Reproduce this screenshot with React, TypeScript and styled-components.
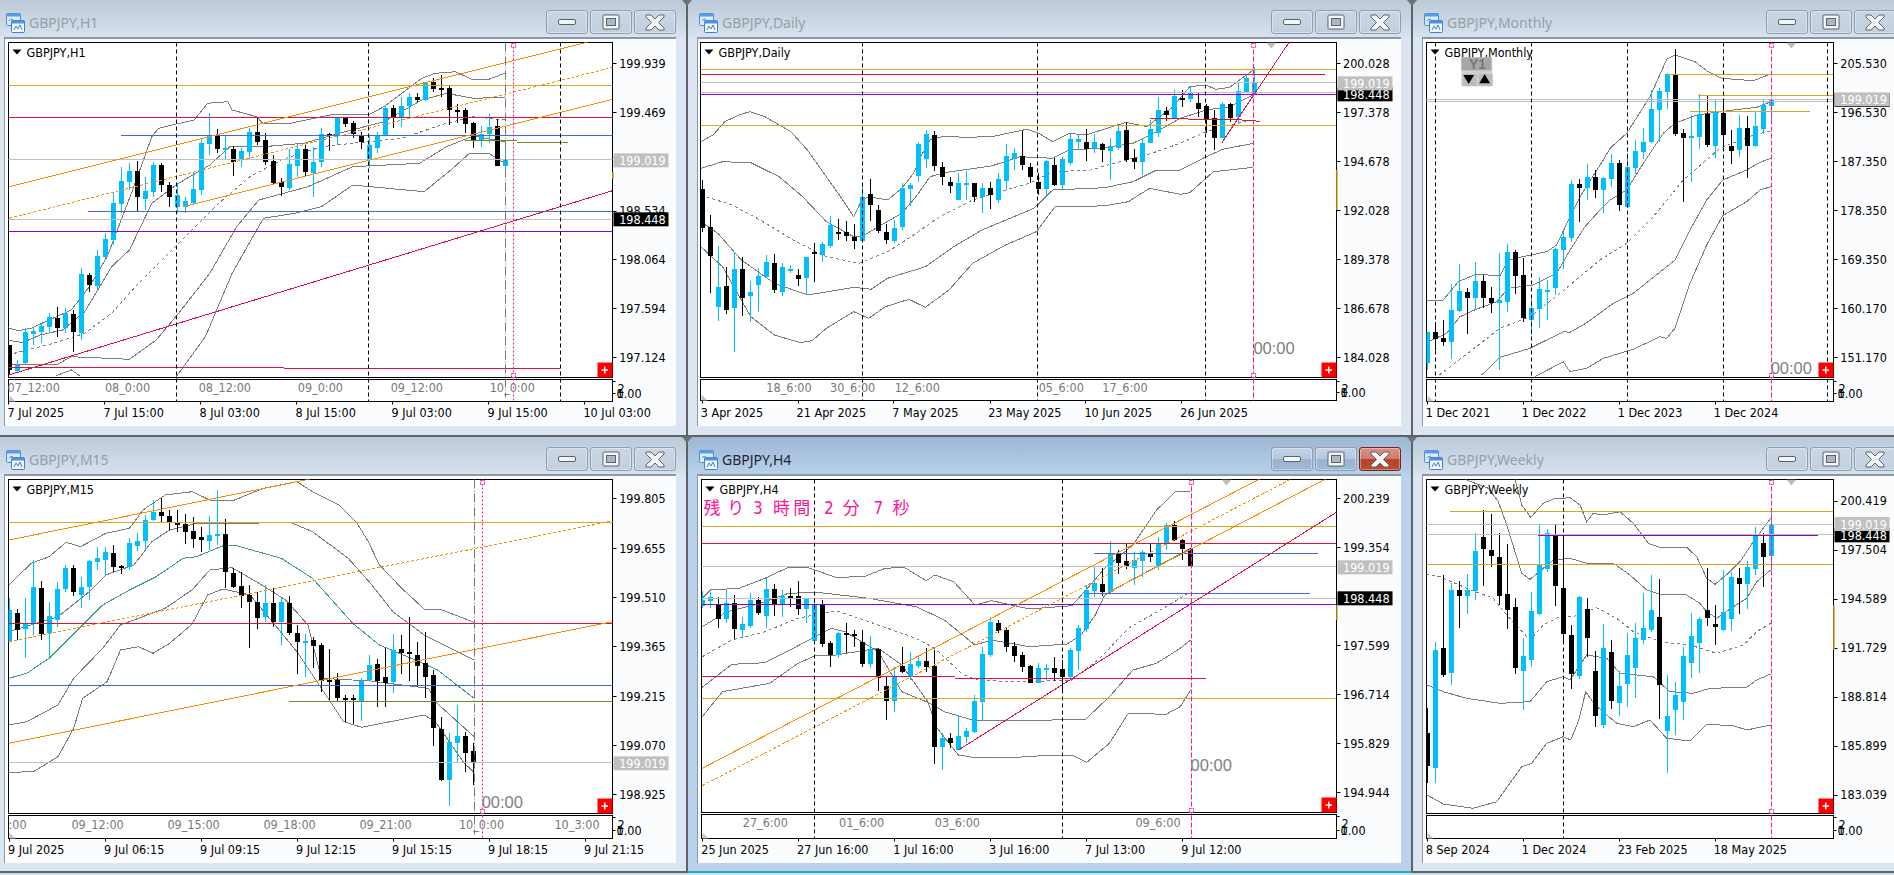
import React from "react";
import styled, { createGlobalStyle } from "styled-components";

const GlobalStyle = createGlobalStyle`
  html, body {
    margin: 0;
    width: 1894px;
    height: 875px;
    overflow: hidden;
    background: #cfdcea;
  }
`;

// Styled
const Desktop = styled.div`
  display: grid;
  grid-template-columns: 688px 725px 495px;
  grid-template-rows: 437px 436px;
  width: 1908px;
`;
const Frame = styled.section<{ $padL: number; $active?: boolean }>`
  position: relative;
  box-sizing: border-box;
  padding: 0 10px 9px ${({ $padL }) => $padL}px;
  border-right: 2px solid #5e6368;
  border-bottom: 2px solid ${({ $active }) => ($active ? "#27a7c0" : "#5e6368")};
  background: ${({ $active }) =>
    $active
      ? "linear-gradient(#9db7d4 0, #b7d0ea 37px, #b9d1eb 37px)"
      : "linear-gradient(#bcc9d7 0, #d6e2ee 37px, #dbe6f2 37px)"};
  &::after {
    content: "";
    position: absolute;
    top: 0;
    right: -6px;
    border: 5px solid transparent;
    border-top: 6px solid #6d7276;
    z-index: 2;
  }
`;
const TitleBar = styled.header`
  display: flex;
  align-items: flex-start;
  height: 37px;
  box-sizing: border-box;
  padding: 10px 0 0 2px;
`;
const TitleIcon = styled.svg`
  flex: none;
  width: 19px;
  height: 20px;
  margin-top: 3px;
`;
const TitleText = styled.span<{ $active?: boolean }>`
  flex: 1;
  margin: 3px 0 0 4px;
  font: 14px "Noto Sans", sans-serif;
  line-height: 20px;
  color: ${({ $active }) => ($active ? "#1b2733" : "#979fa8")};
`;
const ButtonGroup = styled.div`
  display: flex;
  gap: 2px;
`;
const WinButton = styled.div<{ $active?: boolean; $close?: boolean }>`
  display: flex;
  align-items: center;
  justify-content: center;
  width: 42px;
  height: 24px;
  box-sizing: border-box;
  border: 1px solid ${({ $close, $active }) => ($close && $active ? "#6e2a22" : "#8c9fb3")};
  border-radius: 3px;
  box-shadow: inset 0 0 0 1px rgba(255, 255, 255, 0.35);
  background: ${({ $active, $close }) =>
    $close && $active
      ? "linear-gradient(#dd8f84 0, #d27a6c 48%, #b9432b 52%, #bd4a32 100%)"
      : $active
      ? "linear-gradient(#c1d3e6 0, #b6cadf 48%, #9ab4d0 52%, #a0bad6 100%)"
      : "linear-gradient(#cbd6e3, #c2cfde)"};
`;
const Client = styled.div<{ $width: number }>`
  width: ${({ $width }) => $width}px;
  height: 389px;
  background: #fbfcfe;
  box-shadow: inset 1px 2px 0 #8d98a4;
`;
const ChartSvg = styled.svg`
  display: block;
`;
const AxisText = styled.text<{ $tone?: string }>`
  font-family: "DejaVu Sans Condensed", "DejaVu Sans", sans-serif;
  font-stretch: condensed;
  font-size: 12.5px;
  fill: ${({ $tone }) => $tone || "#000"};
`;
const ClockText = styled.text`
  font-family: "Liberation Sans", sans-serif;
  font-size: 16.5px;
  fill: #808080;
`;
const CountdownText = styled.text`
  font-family: "DejaVu Sans Condensed", "Noto Sans CJK JP", sans-serif;
  font-size: 17px;
  fill: #ff1493;
`;
const SmallBadgeText = styled.text`
  font-family: "Liberation Sans", sans-serif;
  font-size: 14px;
  font-weight: 700;
  fill: #787878;
`;

// Colours
const ORANGE = "#ff8c00";
const GOLD = "#daa520";
const CRIMSON = "#dc143c";
const BLUE = "#4169e1";
const SILVER = "#c0c0c0";
const PURPLE = "#9400d3";
const OLIVE = "#6b8e23";
const BAND = "#7c7c7c";
const TEAL = "#3f9a9a";

// Type
type Candle = [number, number, number, number, number];
type PathDef = [string, string, string?];
interface ChartSpec {
  title: string;
  active?: boolean;
  padL: number;
  width: number;
  xs: number;
  sx: number;
  sy: number;
  left: number;
  right: number;
  top: number;
  mainBottom: number;
  subTop: number;
  subBottom: number;
  dateY: number;
  x0: number;
  candles: Candle[];
  bands: PathDef[];
  lines: PathDef[];
  black: number[];
  pink: number;
  pinkDash: string;
  grayDash?: number;
  prices: [number, string][];
  priceX: number;
  badges: [number, string, "silver" | "black"][];
  subLabels: [number, string][];
  subY: number;
  dates: [number, number, string][];
  clock?: [number, number];
  topMark?: number;
  goldTick?: [number, number];
}

const h1: ChartSpec = {
  title: "GBPJPY,H1", padL: 4, width: 672, xs: 2.24, sx: -4, sy: -37,
  left: 17, right: 1372, top: 125, mainBottom: 1130, subTop: 1136, subBottom: 1203, dateY: 1238,
  x0: 20,
  candles: [
    [0,1035,1035,1110,1125],[1,1080,1095,1112,1120],[1,985,997,1090,1095],[1,985,993,1002,1035],[1,970,978,996,1030],
    [1,940,952,980,1000],[0,920,953,985,1010],[1,925,940,985,1000],[0,930,942,995,1055],[1,805,822,998,1020],
    [0,820,826,855,875],[1,750,768,857,870],[1,700,717,770,775],[1,580,608,720,735],[1,500,543,612,640],
    [1,490,513,545,570],[0,483,513,592,637],[1,530,573,597,630],[1,487,495,575,590],[0,490,495,555,575],
    [0,545,555,592,620],[1,550,585,622,640],[1,590,603,620,640],[1,520,567,608,615],[1,415,430,570,585],
    [1,340,405,432,465],[0,388,407,447,460],[1,405,445,450,480],[0,437,447,487,527],[1,445,452,480,500],
    [1,385,397,455,480],[0,352,397,425,435],[0,400,420,487,495],[0,465,483,550,555],[0,533,547,560,587],
    [1,447,492,565,570],[1,430,447,497,532],[0,432,447,515,530],[1,440,487,518,590],[1,385,402,487,500],
    [0,400,403,408,452],[1,350,355,405,435],[0,352,353,372,380],[0,362,370,403,415],[0,395,408,425,447],
    [1,405,435,480,505],[1,395,405,445,458],[1,315,323,405,407],[0,315,325,352,383],[1,290,318,352,380],
    [1,280,292,318,355],[0,280,292,300,305],[1,245,247,300,302],[0,235,245,268,275],[0,225,265,269,290],
    [0,255,265,330,375],[0,312,330,332,370],[0,325,330,372,400],[0,367,369,420,445],[1,378,402,420,440],
    [1,342,380,403,430],[0,358,378,497,497],[1,445,480,497,522],
  ],
  bands: [
    [BAND, "18,983 40,992 70,985 110,960 160,930 200,860 240,770 300,560 340,410 355,385 385,375 435,360 465,310 510,305 520,330 575,350 590,372 650,370 750,342 825,345 860,320 945,235 975,220 1020,215 1060,240 1095,238 1131,220"],
    [BAND, "18,1020 50,1028 90,1005 140,990 190,935 250,800 290,750 340,610 400,550 470,495 515,440 590,440 680,430 760,400 860,365 945,300 1000,280 1060,295 1131,292"],
    [BAND, "18,1065 60,1050 120,1030 190,1000 250,940 310,850 400,730 490,610 560,530 630,480 720,440 790,430 900,415 1000,370 1060,350 1131,360", "3 3"],
    [BAND, "18,1092 130,1092 160,1070 290,1078 350,1020 400,940 470,820 530,680 580,600 690,560 790,500 940,490 1000,440 1060,408 1131,425"],
    [BAND, "125,1127 160,1110 178,1127"],
    [BAND, "395,1130 460,1010 520,820 590,655 660,640 720,620 790,555 950,575 1010,510 1050,462 1095,460 1131,490"],
  ],
  lines: [
    [GOLD, "17,256 1372,256"], [CRIMSON, "17,350 1372,350"], [BLUE, "270,406 1372,406"], [BLUE, "197,632 1372,632"],
    [SILVER, "17,478 1372,478"], [SILVER, "17,658 1372,658"], [PURPLE, "17,694 1372,694"],
    [ORANGE, "20,560 1320,125"], [ORANGE, "410,620 1372,298"], [ORANGE, "20,655 1372,202", "3 2"],
    [OLIVE, "1040,420 1158,422"], [OLIVE, "1158,425 1272,425"],
    [CRIMSON, "20,1125 1372,572"], [CRIMSON, "17,1102 637,1102"], [CRIMSON, "637,1105 1255,1105"],
  ],
  black: [395, 825, 1255], pink: 1148, pinkDash: "2 2", grayDash: 1131,
  prices: [[190,"199.939"],[337,"199.469"],[632,"198.534"],[778,"198.064"],[925,"197.594"],[1072,"197.124"]],
  priceX: 1387,
  badges: [[481,"199.019","silver"],[658,"198.448","black"]],
  subLabels: [[17,"07_12:00"],[235,"08_0:00"],[445,"08_12:00"],[667,"09_0:00"],[875,"09_12:00"],[1097,"10_0:00"]],
  subY: 1162,
  dates: [[18,17,"7 Jul 2025"],[233,232,"7 Jul 15:00"],[448,447,"8 Jul 03:00"],[663,662,"8 Jul 15:00"],[878,877,"9 Jul 03:00"],[1093,1092,"9 Jul 15:00"],[1308,1307,"10 Jul 03:00"]],
  goldTick: [515, 538],
};

const daily: ChartSpec = {
  title: "GBPJPY,Daily", padL: 9, width: 704, xs: 2.119, sx: -17, sy: -37,
  left: 42, right: 1391, top: 125, mainBottom: 1130, subTop: 1136, subBottom: 1201, dateY: 1236,
  x0: 46,
  candles: [
    [0,540,568,685,695],[0,645,680,768,880],[1,738,862,920,962],[0,800,858,930,942],[1,755,808,925,1055],
    [0,770,808,893,948],[1,843,875,888,965],[1,805,828,855,935],[1,765,787,830,835],[0,762,790,870,880],
    [1,790,802,875,888],[1,795,807,813,820],[0,808,826,836,858],[1,770,772,835,883],[0,728,756,762,845],
    [1,725,733,765,785],[1,648,675,738,745],[0,658,695,697,720],[0,662,697,707,722],[0,672,710,722,746],
    [1,553,592,722,725],[0,538,583,614,662],[0,615,630,692,698],[0,672,697,720,732],[1,660,685,723,728],
    [1,550,565,680,690],[1,548,555,567,618],[1,425,432,527,545],[1,390,402,478,505],[0,392,405,497,512],
    [0,485,502,532,555],[0,532,545,557,578],[1,518,550,600,600],[1,512,550,555,600],[0,548,550,590,605],
    [1,548,565,592,640],[0,545,565,585,628],[1,520,538,600,608],[1,432,468,542,570],[1,445,460,478,510],
    [0,392,468,494,510],[0,488,500,532,548],[0,520,547,567,585],[1,480,484,567,592],[0,475,495,555,558],
    [1,470,478,555,567],[1,398,417,490,495],[1,405,417,427,450],[0,388,427,447,482],[1,402,427,445,458],
    [0,428,432,450,485],[1,414,438,453,540],[1,375,393,443,450],[0,365,390,480,485],[0,448,475,485,507],
    [1,415,430,485,525],[1,360,387,428,430],[1,292,330,398,412],[0,322,332,345,362],[1,270,288,355,358],
    [0,270,294,298,320],[1,260,280,298,305],[0,278,308,328,350],[0,312,318,358,400],[0,330,355,413,450],
    [1,305,313,413,415],[0,310,313,355,365],[1,248,273,352,372],[1,225,233,275,277],[1,200,250,283,285],
  ],
  bands: [
    [BAND, "44,425 70,405 95,365 125,345 148,335 180,350 235,395 270,450 295,500 340,590 368,650 385,600 400,590 440,600 470,565 495,520 510,470 530,420 560,408 600,412 660,410 735,388 760,400 790,425 825,400 860,405 945,367 990,380 1012,355 1045,320 1080,260 1115,255 1135,268 1165,262 1200,225 1215,210"],
    [BAND, "44,505 90,485 150,488 210,530 260,590 310,665 368,710 385,710 420,680 470,640 500,590 530,530 560,518 660,498 720,470 790,475 825,450 890,445 960,430 1010,395 1060,355 1115,330 1165,320 1215,285"],
    [BAND, "44,585 110,615 170,660 240,720 310,770 380,790 440,755 490,710 550,650 620,600 690,570 740,550 790,515 870,510 920,490 1000,460 1060,430 1115,395 1165,375 1215,360", "3 3"],
    [BAND, "44,665 80,700 130,780 200,850 270,885 370,862 405,868 440,835 520,800 580,740 640,690 750,625 790,570 900,563 960,545 1010,510 1060,510 1115,470 1150,448 1215,430"],
    [BAND, "44,740 90,800 150,950 200,1005 255,1028 280,1022 310,985 368,935 400,955 435,920 485,898 520,922 570,870 620,790 690,735 755,695 795,620 850,620 900,617 950,605 995,565 1060,583 1080,578 1130,515 1215,502"],
  ],
  lines: [
    [GOLD, "42,208 1391,208"], [CRIMSON, "42,223 1367,223"], [SILVER, "42,247 1391,247"], [SILVER, "42,277 1391,277"],
    [PURPLE, "42,283 1391,283"], [GOLD, "42,376 1391,376"],
    [CRIMSON, "995,355 1190,360"], [CRIMSON, "1190,360 1230,364"], [CRIMSON, "1148,428 1290,128"],
  ],
  black: [385, 757, 1113], pink: 1215, pinkDash: "5 2",
  prices: [[190,"200.028"],[337,"197.378"],[484,"194.678"],[631,"192.028"],[778,"189.378"],[925,"186.678"],[1072,"184.028"]],
  priceX: 1405,
  badges: [[283,"198.448","black"],[250,"199.019","silver"]],
  subLabels: [[183,"18_6:00"],[318,"30_6:00"],[455,"12_6:00"],[760,"05_6:00"],[895,"17_6:00"]],
  subY: 1162,
  dates: [[46,44,"3 Apr 2025"],[249,247,"21 Apr 2025"],[452,450,"7 May 2025"],[656,653,"23 May 2025"],[859,857,"10 Jun 2025"],[1062,1060,"26 Jun 2025"]],
  clock: [1215, 1045], topMark: 1253, goldTick: [510, 630],
};

const monthly: ChartSpec = {
  title: "GBPJPY,Monthly", padL: 9, width: 476, xs: 3, sx: -22, sy: -37,
  left: 77, right: 1300, top: 125, mainBottom: 1130, subTop: 1136, subBottom: 1203, dateY: 1238,
  x0: 80,
  candles: [
    [1,995,997,1088,1110],[0,965,997,1018,1050],[0,960,1013,1026,1038],[1,852,930,1026,1078],[1,792,873,933,937],
    [0,865,877,893,1002],[1,786,843,894,930],[0,825,843,894,925],[0,860,894,908,938],[1,760,900,910,1110],
    [1,732,756,906,936],[0,750,756,828,882],[0,775,825,955,965],[1,897,925,960,1005],[1,832,868,927,985],
    [1,840,870,872,960],[1,745,748,864,886],[1,697,712,750,806],[1,540,552,714,726],[0,537,552,564,665],
    [1,492,531,564,600],[0,510,531,570,595],[1,530,533,570,638],[1,462,489,537,562],[0,480,489,615,633],
    [1,460,501,621,625],[1,420,453,504,522],[1,385,426,456,478],[1,270,327,426,430],[1,265,273,330,425],
    [1,220,222,276,327],[0,148,225,403,408],[0,388,399,414,606],[1,345,408,414,546],[1,283,343,411,447],
    [0,285,343,435,441],[1,297,336,438,474],[0,305,339,405,440],[0,390,438,453,492],[1,345,384,450,472],
    [0,348,384,438,534],[1,335,378,438,442],[1,297,315,387,402],[1,296,297,318,360],
  ],
  bands: [
    [BAND, "77,903 130,900 175,845 230,822 300,828 325,780 360,772 440,755 470,735 510,650 540,590 610,480 630,445 680,400 750,290 800,178 825,165 885,185 920,212 965,235 1060,242 1112,222"],
    [BAND, "77,1028 140,1000 180,950 230,927 290,905 325,865 400,855 470,820 510,750 555,680 600,630 630,600 680,570 730,490 790,400 825,370 890,345 1000,330 1070,322 1112,305"],
    [BAND, "118,1125 190,1070 300,985 390,950 480,880 600,780 680,730 760,650 850,540 960,445 1060,405 1112,393", "3 3"],
    [BAND, "245,1125 300,1072 390,1045 490,995 510,997 560,968 640,910 700,880 750,840 825,780 870,690 920,600 968,540 1040,510 1080,487 1112,475"],
    [BAND, "405,1130 490,1085 510,1115 560,1105 610,1075 700,1048 780,1010 800,1015 825,985 870,850 920,735 968,647 1040,605 1080,570 1112,560"],
  ],
  lines: [
    [GOLD, "800,223 1300,223"], [GOLD, "895,284 1300,284"], [GOLD, "870,334 1230,334"],
    [SILVER, "77,296 1300,296"], [SILVER, "77,302 1300,302"],
  ],
  black: [104, 392, 680, 968, 1280], pink: 1112, pinkDash: "5 2",
  prices: [[190,"205.530"],[337,"196.530"],[484,"187.350"],[631,"178.350"],[778,"169.350"],[925,"160.170"],[1072,"151.170"]],
  priceX: 1321,
  badges: [[300,"198.448","black"],[298,"199.019","silver"]],
  subLabels: [],
  subY: 1162,
  dates: [[80,77,"1 Dec 2021"],[368,365,"1 Dec 2022"],[656,653,"1 Dec 2023"],[944,941,"1 Dec 2024"]],
  clock: [1112, 1105], topMark: 1174,
};

const m15: ChartSpec = {
  title: "GBPJPY,M15", padL: 4, width: 672, xs: 2.24, sx: -4, sy: -39,
  left: 19, right: 1372, top: 131, mainBottom: 1135, subTop: 1141, subBottom: 1210, dateY: 1244,
  x0: 21,
  candles: [
    [1,490,525,620,622],[0,522,535,585,615],[1,490,567,583,668],[1,375,457,567,600],[0,438,460,597,615],
    [1,500,544,595,665],[1,440,463,555,575],[1,390,400,462,470],[0,390,400,472,483],[1,425,455,480,518],
    [1,375,378,455,495],[1,335,370,380,405],[1,335,352,375,420],[0,330,355,397,410],[0,390,394,400,417],
    [1,310,325,395,405],[1,295,318,332,348],[1,240,255,318,345],[1,195,230,255,258],[0,190,232,243,260],
    [0,225,243,260,285],[0,225,260,270,292],[0,237,268,290,327],[0,245,288,312,340],[0,275,306,315,352],
    [1,243,300,317,345],[1,165,298,300,330],[0,253,298,410,460],[0,400,414,455,460],[0,410,453,483,518],
    [0,450,480,502,638],[0,470,502,548,582],[1,450,505,545,560],[0,460,505,560,575],[1,490,500,560,630],
    [0,483,505,593,600],[0,570,595,622,717],[1,597,618,624,725],[0,605,616,632,700],[0,625,630,737,772],
    [0,642,735,737,795],[0,715,736,790,800],[0,780,790,794,860],[0,780,790,795,868],[1,730,738,798,858],
    [1,660,690,736,738],[0,672,687,738,815],[0,640,726,744,815],[1,597,645,740,775],[0,600,643,653,717],
    [0,545,651,656,738],[0,620,660,692,755],[0,590,685,725,790],[0,705,720,880,932],[0,845,882,1034,1038],
    [1,895,921,1034,1112],[1,810,903,923,985],[0,890,903,953,1010],[0,925,948,980,1050],
  ],
  bands: [
    [BAND, "20,450 70,385 110,365 148,322 180,335 237,295 290,280 320,225 370,180 430,170 470,195 520,198 590,160 665,140 700,170 760,210 800,265 825,320 850,390 900,460 950,522 990,525 1062,562"],
    [BAND, "20,590 130,545 200,470 237,420 300,390 340,320 380,285 440,265 550,265 650,262 700,290 780,370 830,445 880,530 950,600 1062,675"],
    [TEAL, "20,730 60,715 110,670 170,590 230,510 290,465 350,425 410,370 440,365 500,332 530,332 630,370 700,430 790,565 850,630 930,675 980,705 1062,790"],
    [BAND, "20,870 60,860 130,810 165,730 230,640 270,570 370,520 430,465 470,405 520,398 580,445 640,495 690,570 720,730 830,738 930,755 960,760 975,800 1062,905"],
    [BAND, "20,1012 75,1010 130,965 165,880 185,790 240,740 270,645 310,635 343,655 380,625 430,568 465,480 500,462 560,480 610,560 665,650 720,760 770,860 810,877 950,840 975,860 1040,985 1062,1012"],
  ],
  lines: [
    [GOLD, "19,262 1372,262"], [CRIMSON, "19,565 1372,565"], [BLUE, "19,751 1372,751"], [OLIVE, "648,799 1372,799"], [SILVER, "19,982 1372,982"],
    [ORANGE, "20,315 695,132"], [ORANGE, "20,925 1372,560"], [ORANGE, "20,620 1372,258", "3 2"],
  ],
  black: [], pink: 1079, pinkDash: "2 2", grayDash: 1061,
  prices: [[190,"199.805"],[340,"199.655"],[487,"199.510"],[634,"199.365"],[784,"199.215"],[931,"199.070"],[1078,"198.925"]],
  priceX: 1387,
  badges: [[985,"199.019","silver"]],
  subLabels: [[19,":00"],[160,"09_12:00"],[375,"09_15:00"],[590,"09_18:00"],[805,"09_21:00"],[1028,"10_0:00"],[1242,"10_3:00"]],
  subY: 1168,
  dates: [[20,18,"9 Jul 2025"],[236,233,"9 Jul 06:15"],[451,448,"9 Jul 09:15"],[666,663,"9 Jul 12:15"],[881,878,"9 Jul 15:15"],[1096,1093,"9 Jul 18:15"],[1311,1308,"9 Jul 21:15"]],
  clock: [1079, 1102],
};

const h4: ChartSpec = {
  title: "GBPJPY,H4", active: true, padL: 9, width: 704, xs: 2.119, sx: -17, sy: -39,
  left: 45, right: 1391, top: 131, mainBottom: 1130, subTop: 1136, subBottom: 1210, dateY: 1243,
  x0: 47,
  candles: [
    [1,467,495,512,520],[1,470,485,497,520],[0,485,510,552,580],[1,465,505,552,565],[0,480,503,583,612],
    [1,545,567,585,607],[1,475,495,573,578],[0,485,495,535,540],[1,430,462,543,580],[0,447,462,510,543],
    [1,465,483,510,545],[0,458,483,487,515],[0,438,483,522,540],[1,490,490,522,565],[1,490,508,618,620],
    [0,495,508,628,635],[0,618,625,660,695],[1,590,595,660,670],[0,565,595,598,655],[0,585,597,602,635],
    [0,585,622,687,695],[1,603,642,688,700],[0,640,643,728,768],[0,725,752,797,855],[1,695,722,797,830],
    [0,635,693,712,715],[1,650,687,725,735],[1,665,678,692,700],[0,640,678,695,712],[0,645,693,935,988],
    [1,895,908,935,1005],[0,895,908,925,940],[1,840,903,945,945],[1,880,887,905,925],[1,780,798,892,895],
    [1,635,656,800,855],[1,545,562,660,665],[0,555,564,588,595],[0,578,585,635,652],[0,620,633,662,680],
    [0,650,660,697,710],[0,690,693,745,745],[1,685,698,743,745],[1,688,700,705,735],[0,665,700,713,738],
    [0,675,703,727,770],[1,640,645,727,730],[1,570,578,648,705],[1,450,465,582,590],[1,395,445,468,485],
    [0,400,447,472,482],[1,318,355,472,475],[0,345,358,383,418],[0,325,378,392,402],[1,350,376,398,450],
    [1,345,352,377,425],[0,328,358,365,380],[1,305,327,395,405],[1,265,270,325,345],[0,258,270,315,318],
    [0,312,315,342,375],[0,338,342,393,395],
  ],
  bands: [
    [BAND, "47,490 65,465 125,460 180,430 230,397 270,397 330,427 390,425 435,400 475,397 522,437 540,420 580,440 625,510 660,497 740,522 830,512 860,465 900,400 960,330 1010,225 1050,170 1082,168"],
    [BAND, "47,575 100,530 170,505 230,475 290,472 400,490 500,515 560,555 625,630 660,615 740,635 820,627 850,600 880,540 900,480 950,440 1010,395 1082,340"],
    [BAND, "47,665 110,615 180,590 250,550 330,527 400,560 500,610 540,640 600,720 640,737 740,740 830,735 890,670 950,580 1030,515 1082,470", "3 3"],
    [BAND, "47,757 110,688 180,683 240,640 320,580 350,590 420,650 470,770 530,805 560,830 620,855 740,857 860,852 910,785 960,705 1010,685 1060,640 1082,615"],
    [BAND, "47,845 90,770 190,745 250,685 290,660 330,660 420,640 470,690 525,800 545,880 590,960 620,967 700,968 790,960 830,960 862,982 910,925 950,835 1030,838 1060,815 1082,765"],
  ],
  lines: [
    [GOLD, "45,274 1391,274"], [CRIMSON, "45,325 1391,325"], [BLUE, "877,355 1352,355"], [SILVER, "45,394 1391,394"],
    [BLUE, "862,475 1335,475"], [SILVER, "45,490 1391,490"], [PURPLE, "45,508 1391,508"],
    [CRIMSON, "45,724 583,724"], [CRIMSON, "583,728 1115,728"], [GOLD, "45,790 1391,790"],
    [ORANGE, "47,1000 1228,132"], [ORANGE, "910,470 1368,132"], [ORANGE, "47,1052 1295,132", "3 2"],
    [CRIMSON, "590,945 1391,232"],
  ],
  black: [285, 810], pink: 1082, pinkDash: "5 2",
  prices: [[190,"200.239"],[337,"199.354"],[631,"197.599"],[778,"196.714"],[925,"195.829"],[1072,"194.944"]],
  priceX: 1405,
  badges: [[397,"199.019","silver"],[490,"198.448","black"]],
  subLabels: [[133,"27_6:00"],[337,"01_6:00"],[540,"03_6:00"],[965,"09_6:00"]],
  subY: 1162,
  dates: [[47,45,"25 Jun 2025"],[251,248,"27 Jun 16:00"],[454,452,"1 Jul 16:00"],[657,655,"3 Jul 16:00"],[861,858,"7 Jul 13:00"],[1064,1062,"9 Jul 12:00"]],
  clock: [1082, 990], topMark: 1158, goldTick: [510, 555],
};

const weekly: ChartSpec = {
  title: "GBPJPY,Weekly", padL: 9, width: 476, xs: 3, sx: -22, sy: -39,
  left: 77, right: 1300, top: 131, mainBottom: 1135, subTop: 1141, subBottom: 1210, dateY: 1244,
  x0: 80,
  candles: [
    [0,820,895,992,1045],[1,622,646,1000,1043],[0,420,640,720,726],[1,445,466,713,750],[0,438,466,482,578],
    [1,418,465,483,537],[1,293,348,468,495],[0,225,307,341,453],[0,237,346,362,395],[0,295,367,482,510],
    [0,326,478,525,582],[0,490,517,698,716],[1,610,664,707,825],[1,472,529,674,695],[1,270,390,537,540],
    [1,282,295,402,410],[0,270,302,452,513],[0,310,460,596,625],[0,570,601,716,762],[1,484,486,723,731],
    [0,490,523,608,665],[0,648,708,842,875],[1,568,640,870,878],[0,616,652,797,822],[1,707,754,804,843],
    [1,595,660,747,815],[1,565,610,698,788],[1,475,580,615,627],[1,420,526,585,590],[0,432,547,750,852],
    [1,720,843,888,1013],[1,742,780,825,900],[1,637,664,800,855],[1,535,604,684,730],[1,545,552,623,715],
    [0,400,526,550,573],[0,510,567,576,630],[1,405,532,585,587],[1,410,427,552,588],[0,400,430,446,537],
    [1,377,397,447,522],[1,276,297,402,420],[0,295,325,365,456],[1,232,267,362,405],
  ],
  bands: [
    [BAND, "345,131 365,210 392,247 430,205 460,192 510,188 540,210 560,260 580,235 610,240 660,230 700,265 745,325 780,337 860,337 890,365 920,430 945,448 985,415 1020,380 1060,320 1112,250"],
    [BAND, "195,133 265,160 295,200 320,270 345,350 365,415 390,433 430,400 460,375 510,370 560,385 640,385 690,420 740,465 780,478 860,480 900,505 920,530 950,550 1000,515 1040,490 1070,440 1112,405"],
    [BAND, "77,418 120,425 200,460 280,490 320,540 390,615 430,570 480,545 520,545 590,518 650,550 700,590 790,622 870,630 950,655 1030,630 1070,590 1112,565", "3 3"],
    [BAND, "77,748 130,770 200,790 300,805 390,800 440,740 490,725 510,735 560,660 620,670 660,715 760,725 810,770 880,775 930,760 1040,757 1070,735 1112,717"],
    [BAND, "77,1078 130,1107 220,1120 290,1100 365,995 395,985 440,925 490,905 512,915 535,860 557,770 585,810 650,865 700,875 750,855 800,910 870,918 920,868 1000,872 1040,885 1112,870"],
  ],
  lines: [
    [GOLD, "150,229 1300,229"], [SILVER, "77,266 1300,266"], [SILVER, "77,296 1300,296"], [PURPLE, "415,301 1255,301"], [GOLD, "77,388 1300,388"],
  ],
  black: [488], pink: 1112, pinkDash: "5 2",
  prices: [[197,"200.419"],[344,"197.504"],[491,"194.589"],[638,"191.729"],[785,"188.814"],[932,"185.899"],[1079,"183.039"]],
  priceX: 1321,
  badges: [[301,"198.448","black"],[267,"199.019","silver"]],
  subLabels: [],
  subY: 1168,
  dates: [[80,77,"8 Sep 2024"],[368,365,"1 Dec 2024"],[656,653,"23 Feb 2025"],[944,941,"18 May 2025"]],
  topMark: 1174, goldTick: [510, 645],
};

const parsePoints = (s: string) => s.split(" ").map((p) => p.split(",").map(Number));

const AppIcon = () => (
  <TitleIcon viewBox="0 0 19 20">
    <rect x="0.5" y="0.5" width="14" height="12" rx="1" fill="#dcebfb" stroke="#4f8ad6" />
    <rect x="0.5" y="0.5" width="14" height="3" fill="#5b9be6" />
    <rect x="5.5" y="7.5" width="13" height="12" rx="1" fill="#f4f9ff" stroke="#3f7fd0" />
    <rect x="5.5" y="7.5" width="13" height="3" fill="#4f90e0" />
    <path d="M8 17l2-4 2 3 2-4 2 5" fill="none" stroke="#3f7fd0" />
    <path d="M3 8l2-2 2 1" fill="none" stroke="#4f8ad6" />
  </TitleIcon>
);

const MinGlyph = () => (
  <svg width="18" height="8" viewBox="0 0 18 8">
    <rect x="0.5" y="1.5" width="17" height="5" rx="1.5" fill="#f4f6f8" stroke="#59636d" />
  </svg>
);
const MaxGlyph = () => (
  <svg width="18" height="16" viewBox="0 0 18 16">
    <rect x="1" y="1" width="16" height="14" rx="1" fill="#f4f6f8" stroke="#59636d" />
    <rect x="4.5" y="4.5" width="9" height="7" fill="#a9b8c9" stroke="#59636d" />
  </svg>
);
const CloseGlyph = () => (
  <svg width="20" height="17" viewBox="0 0 20 17">
    <path
      d="M1 1h5l4 4 4-4h5v2l-5.5 5.5L19 14v2h-5l-4-4-4 4H1v-2l5.5-5.5L1 3z"
      fill="#f2f4f6"
      stroke="#5c6670"
    />
  </svg>
);

const Chart = ({ spec }: { spec: ChartSpec }) => {
  const X = (z: number) => z / spec.xs + spec.sx;
  const Y = (z: number) => z / 3 + spec.sy;
  const snap = (n: number) => Math.round(n) + 0.5;
  const left = snap(X(spec.left));
  const right = snap(X(spec.right));
  const top = snap(Y(spec.top));
  const mainBottom = snap(Y(spec.mainBottom));
  const subTop = snap(Y(spec.subTop));
  const subBottom = snap(Y(spec.subBottom));
  const clipId = `plot-${spec.title.replace(",", "-")}`;
  const cx0 = Math.round(X(spec.x0));
  const pinkX = snap(X(spec.pink));

  const renderPath = ([color, d, dash]: PathDef, key: number) => {
    const pts = parsePoints(d);
    const flat = pts.every((p) => p[1] === pts[0][1]);
    const points = pts
      .map(([a, b]) => `${X(a).toFixed(1)},${(flat ? snap(Y(b)) : Y(b)).toFixed(1)}`)
      .join(" ");
    return (
      <polyline
        key={key}
        points={points}
        fill="none"
        stroke={color}
        strokeWidth={1}
        strokeDasharray={dash}
        shapeRendering="crispEdges"
      />
    );
  };

  return (
    <ChartSvg width={spec.width} height={389} viewBox={`0 0 ${spec.width} 389`}>
      <defs>
        <clipPath id={clipId}>
          <rect x={left} y={top} width={right - left} height={mainBottom - top} />
        </clipPath>
      </defs>
      <rect x={left} y={top} width={right - left} height={mainBottom - top} fill="#fff" stroke="#000" />
      <rect x={left} y={subTop} width={right - left} height={subBottom - subTop} fill="#fff" stroke="#000" />
      <polygon points={`${left + 1},${subBottom} ${left + 1},${subBottom - 6} ${left + 7},${subBottom}`} fill="#c4c4c4" />

      <g clipPath={`url(#${clipId})`}>
        {spec.bands.map((b, i) => renderPath(b, i))}
        {spec.candles.map(([bull, hi, t, b, lo], i) => {
          const color = bull ? "#00bfff" : "#000";
          const cx = cx0 + i * 8;
          const bodyTop = Math.round(Y(t));
          return (
            <g key={i} fill={color}>
              <rect x={cx} y={Math.round(Y(hi))} width={1} height={Math.max(1, Math.round(Y(lo)) - Math.round(Y(hi)))} />
              <rect x={cx - 2} y={bodyTop} width={5} height={Math.max(2, Math.round(Y(b)) - bodyTop)} />
            </g>
          );
        })}
        {spec.lines.map((l, i) => renderPath(l, i))}
        {spec.topMark && (
          <polygon
            points={`${X(spec.topMark) - 5},${top} ${X(spec.topMark) + 5},${top} ${X(spec.topMark)},${top + 6}`}
            fill="#bdbdbd"
          />
        )}
      </g>

      {spec.black.map((x) => (
        <line key={x} x1={snap(X(x))} x2={snap(X(x))} y1={top} y2={subBottom} stroke="#000" strokeDasharray="4 3" />
      ))}
      {spec.grayDash && (
        <line x1={snap(X(spec.grayDash))} x2={snap(X(spec.grayDash))} y1={top} y2={subBottom - 4} stroke="#777" strokeDasharray="9 2 1 2" />
      )}
      <line x1={pinkX} x2={pinkX} y1={top} y2={subBottom} stroke="#ff1493" strokeDasharray={spec.pinkDash} />
      <rect x={pinkX - 2} y={top + 1} width={4} height={4} fill="#fff" stroke="#ff1493" strokeDasharray="2 1" />
      <rect x={pinkX - 2} y={mainBottom - 4} width={4} height={4} fill="#fff" stroke="#ff1493" strokeDasharray="2 1" />

      <polygon
        points={`${left + 4},${top + 7} ${left + 13},${top + 7} ${left + 8.5},${top + 12}`}
        fill="#000"
      />
      <AxisText x={left + 18} y={top + 14.5}>{spec.title}</AxisText>

      {spec.clock && <ClockText x={X(spec.clock[0])} y={Y(spec.clock[1]) + 6}>00:00</ClockText>}

      <rect x={right - 15} y={mainBottom - 15} width={15} height={15} fill="#f00" />
      <rect x={right - 8.5} y={mainBottom - 11} width={1.5} height={7} fill="#fff" />
      <rect x={right - 11} y={mainBottom - 8.2} width={6.5} height={1.5} fill="#fff" />

      {spec.prices.map(([y, t]) => (
        <g key={t}>
          <line x1={right} x2={right + 4} y1={snap(Y(y))} y2={snap(Y(y))} stroke="#000" />
          <AxisText x={X(spec.priceX)} y={Y(y) + 4.5}>{t}</AxisText>
        </g>
      ))}
      {spec.goldTick && (
        <line x1={right + 0.5} x2={right + 0.5} y1={Y(spec.goldTick[0])} y2={Y(spec.goldTick[1])} stroke="#daa520" strokeWidth={1.5} />
      )}
      {spec.badges.map(([y, t, kind]) => (
        <g key={t}>
          <rect x={right + 1} y={Y(y) - 7} width={55} height={14} fill={kind === "black" ? "#000" : "#c0c0c0"} />
          <AxisText x={X(spec.priceX)} y={Y(y) + 4.5} $tone="#fff">{t}</AxisText>
        </g>
      ))}

      {spec.subLabels.map(([x, t]) => (
        <AxisText key={t} x={X(x)} y={Y(spec.subY) + 4.5} $tone="#777">{t}</AxisText>
      ))}
      <AxisText x={right + 5} y={subTop + 13}>2</AxisText>
      <AxisText x={right + 4} y={subBottom - 4}>0</AxisText>
      <AxisText x={right + 4} y={subBottom - 4}>1.00</AxisText>
      <line x1={right} x2={right + 3} y1={subTop + 2} y2={subTop + 2} stroke="#000" />
      <line x1={right} x2={right + 3} y1={subBottom - 8} y2={subBottom - 8} stroke="#000" />

      {spec.dates.map(([tick, x, t]) => (
        <g key={t}>
          <line x1={snap(X(tick))} x2={snap(X(tick))} y1={subBottom} y2={subBottom + 3} stroke="#000" />
          <AxisText x={X(x)} y={Y(spec.dateY) + 4.5}>{t}</AxisText>
        </g>
      ))}

      {spec === h4 && (
        <CountdownText
          y={Y(218) + 6}
          x={[50, 100, 130, 155, 180, 197, 240, 285, 305, 330, 345, 390, 410, 435, 450].map((v) => X(v).toFixed(1)).join(" ")}
        >
          残り 3 時間 2 分 7 秒
        </CountdownText>
      )}

      {spec === monthly && (
        <g>
          <rect x={X(184)} y={Y(172)} width={31} height={29} fill="#cfcfcf" />
          <rect x={X(184)} y={Y(172)} width={30} height={13} fill="#a6a6a6" />
          <SmallBadgeText x={X(207)} y={Y(172) + 11.5}>Y1</SmallBadgeText>
          <rect x={X(188)} y={Y(222)} width={14} height={12} fill="#bcbcbc" />
          <rect x={X(236)} y={Y(222)} width={14} height={12} fill="#bcbcbc" />
          <polygon points={`${X(190)},${Y(225)} ${X(222)},${Y(225)} ${X(206)},${Y(252)}`} fill="#000" />
          <polygon points={`${X(238)},${Y(250)} ${X(270)},${Y(250)} ${X(254)},${Y(222)}`} fill="#000" />
        </g>
      )}
    </ChartSvg>
  );
};

const ChartWindow = ({ spec }: { spec: ChartSpec }) => (
  <Frame $padL={spec.padL} $active={spec.active}>
    <TitleBar>
      <AppIcon />
      <TitleText $active={spec.active}>{spec.title}</TitleText>
      <ButtonGroup>
        <WinButton $active={spec.active}><MinGlyph /></WinButton>
        <WinButton $active={spec.active}><MaxGlyph /></WinButton>
        <WinButton $active={spec.active} $close><CloseGlyph /></WinButton>
      </ButtonGroup>
    </TitleBar>
    <Client $width={spec.width}>
      <Chart spec={spec} />
    </Client>
  </Frame>
);

const App = () => (
  <>
    <GlobalStyle />
    <Desktop>
      {[h1, daily, monthly, m15, h4, weekly].map((spec) => (
        <ChartWindow key={spec.title} spec={spec} />
      ))}
    </Desktop>
  </>
);

export default App;
